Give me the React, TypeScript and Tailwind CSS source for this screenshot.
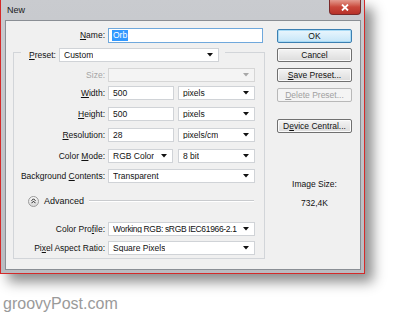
import React from 'react';

const font = "font-['Liberation_Sans',Arial,sans-serif]";

function Arrow({ disabled }: { disabled?: boolean }) {
  return (
    <svg width="6" height="4" viewBox="0 0 6 4" className="shrink-0">
      <path d="M0 0h6L3 3.5z" fill={disabled ? '#a8a8a8' : '#111'} />
    </svg>
  );
}

function Select({ value, className, disabled, textClass = '' }: { value?: string; className: string; disabled?: boolean; textClass?: string }) {
  return (
    <div
      className={`flex items-center justify-between h-[14px] border pl-[4px] pr-[5px] ${
        disabled ? 'bg-[#f4f4f4] border-[#d6d6d6]' : 'bg-white border-[#d0d3d7]'
      } ${className}`}
    >
      <span className={`whitespace-nowrap overflow-hidden ${textClass}`}>{value}</span>
      <Arrow disabled={disabled} />
    </div>
  );
}

function Input({ value, className }: { value: string; className: string }) {
  return (
    <div className={`flex items-center h-[14px] bg-white border border-[#d0d3d7] pl-[4px] ${className}`}>{value}</div>
  );
}

function Row({ label, children, className = '', muted }: { label: React.ReactNode; children: React.ReactNode; className?: string; muted?: boolean }) {
  return (
    <div className={`flex items-center ${className}`}>
      <div className={`w-[94px] pr-[3px] text-right whitespace-nowrap ${muted ? 'text-[#a5a5a5]' : ''}`}>{label}</div>
      {children}
    </div>
  );
}

function Btn({ children, primary, disabled, className = '' }: { children: React.ReactNode; primary?: boolean; disabled?: boolean; className?: string }) {
  const look = primary
    ? 'border-[#3c7fb1] bg-gradient-to-b from-[#eaf6fd] to-[#c6e6f8] shadow-[inset_0_0_0_1px_#a9dbf6]'
    : disabled
    ? 'border-[#b8b8b8] bg-[#f4f4f4] text-[#a0a0a0]'
    : 'border-[#707070] bg-gradient-to-b from-[#f4f4f4] to-[#dcdcdc] shadow-[inset_0_0_0_1px_#fbfbfb]';
  return (
    <div className={`flex items-center justify-center h-[14px] w-[75px] rounded-[2px] border ${look} ${className}`}>{children}</div>
  );
}

export default function App() {
  return (
    <div className={`w-[396px] h-[315px] bg-white overflow-hidden text-[8.5px] leading-none text-[#111] ${font}`}>
      {/* window */}
      <div className="w-[365px] h-[274px] flex flex-col border-x border-b border-[#d42a2a] bg-gradient-to-b from-[#c9cbcf] to-[#b9bcc1] shadow-[8px_8px_12px_rgba(0,0,0,0.45)]">
        <div className="h-[20px] flex items-start justify-between shrink-0">
          <span className="mt-[6px] ml-[6px] text-[9px] text-[#1a1a1a]">New</span>
          <div className="mr-[3px] w-[32px] h-[15px] flex items-center justify-center rounded-b-[4px] border border-t-0 border-[#7a2a2a] bg-gradient-to-b from-[#e39a8f] via-[#c9483b] to-[#b8322a]">
            <svg width="8" height="7" viewBox="0 0 8 7">
              <path d="M1 0.5l6 6M7 0.5l-6 6" stroke="#fff" strokeWidth="1.8" />
            </svg>
          </div>
        </div>

        {/* client area */}
        <div className="flex-1 ml-[4px] mr-[3px] mb-[3px] border border-[#8a8e94] bg-[#f0f0f0] flex pl-[7px] pt-[7px]">
          {/* left */}
          <div className="w-[253px] flex flex-col">
            <div className="flex items-center h-[15px]">
              <div className="w-[95px] pr-[3px] text-right"><u>N</u>ame:</div>
              <div className="flex items-center w-[155px] h-[15px] bg-white border border-[#6fa8dc] pl-[3px]">
                <span className="bg-[#3399ff] text-white px-[1px] h-[11px] flex items-center">Orb</span>
              </div>
            </div>

            {/* group */}
            <div className="w-[252px] mt-[5px] flex flex-col">
              <div className="flex items-start h-[14px]">
                <div className="w-[8px] h-[10px] mt-[4px] border-l border-t border-[#d2d5d9]" />
                <div className="w-[38px] pl-[8px] h-[14px] flex items-center"><u>P</u>reset:</div>
                <Select value="Custom" className="w-[160px]" />
                <div className="flex-1 ml-[6px] h-[10px] mt-[4px] border-r border-t border-[#d2d5d9]" />
              </div>
              <div className="border-x border-b border-[#d2d5d9] pt-[6px] pb-[3px] flex flex-col">
                <Row label="Size:" muted className="h-[14px]">
                  <Select className="w-[147px]" disabled />
                </Row>
                <Row label={<><u>W</u>idth:</>} className="h-[14px] mt-[4px]">
                  <Input value="500" className="w-[66px]" />
                  <Select value="pixels" className="w-[77px] ml-[4px]" />
                </Row>
                <Row label={<><u>H</u>eight:</>} className="h-[14px] mt-[7px]">
                  <Input value="500" className="w-[66px]" />
                  <Select value="pixels" className="w-[77px] ml-[4px]" />
                </Row>
                <Row label={<><u>R</u>esolution:</>} className="h-[14px] mt-[7px]">
                  <Input value="28" className="w-[66px]" />
                  <Select value="pixels/cm" className="w-[77px] ml-[4px]" />
                </Row>
                <Row label={<>Color <u>M</u>ode:</>} className="h-[14px] mt-[7px]">
                  <Select value="RGB Color" className="w-[65px]" />
                  <Select value="8 bit" className="w-[77px] ml-[5px]" />
                </Row>
                <Row label={<>Background <u>C</u>ontents:</>} className="h-[14px] mt-[6px]">
                  <Select value="Transparent" className="w-[147px]" />
                </Row>
                <div className="flex items-center h-[14px] mt-[11px] pl-[14px] pr-[10px]">
                  <div className="w-[11px] h-[11px] rounded-full border border-[#9a9a9a] bg-gradient-to-b from-[#fafafa] to-[#d8d8d8] flex items-center justify-center">
                    <svg width="5" height="6" viewBox="0 0 5 6">
                      <path d="M0.5 2.8L2.5 0.8L4.5 2.8M0.5 5.2L2.5 3.2L4.5 5.2" stroke="#222" strokeWidth="1" fill="none" />
                    </svg>
                  </div>
                  <span className="ml-[5px] text-[9px]">Advanced</span>
                  <div className="flex-1 ml-[5px] border-t border-[#c9cbce] border-b-white border-b" />
                </div>
                <Row label={<>Color Pro<u>f</u>ile:</>} className="h-[14px] mt-[14px]">
                  <Select value="Working RGB: sRGB IEC61966-2.1" className="w-[147px] pl-[3px] pr-[4px]" textClass="tracking-[-0.35px]" />
                </Row>
                <Row label={<>Pi<u>x</u>el Aspect Ratio:</>} className="h-[14px] mt-[5px]">
                  <Select value="Square Pixels" className="w-[147px]" />
                </Row>
              </div>
            </div>
          </div>

          {/* right */}
          <div className="ml-[11px] flex flex-col items-center">
            <Btn primary className="mt-[1px]">OK</Btn>
            <Btn className="mt-[5px]">Cancel</Btn>
            <Btn className="mt-[6px]"><u>S</u>ave Preset...</Btn>
            <Btn disabled className="mt-[6px]"><u>D</u>elete Preset...</Btn>
            <Btn className="mt-[17px]">D<u>e</u>vice Central...</Btn>
            <div className="mt-[47px] text-center">Image Size:</div>
            <div className="mt-[10px] text-center">732,4K</div>
          </div>
        </div>
      </div>

      <div className="mt-[22px] ml-[3px] text-[16px] leading-[16px] text-[#9a9a9a]">groovyPost.com</div>
    </div>
  );
}
